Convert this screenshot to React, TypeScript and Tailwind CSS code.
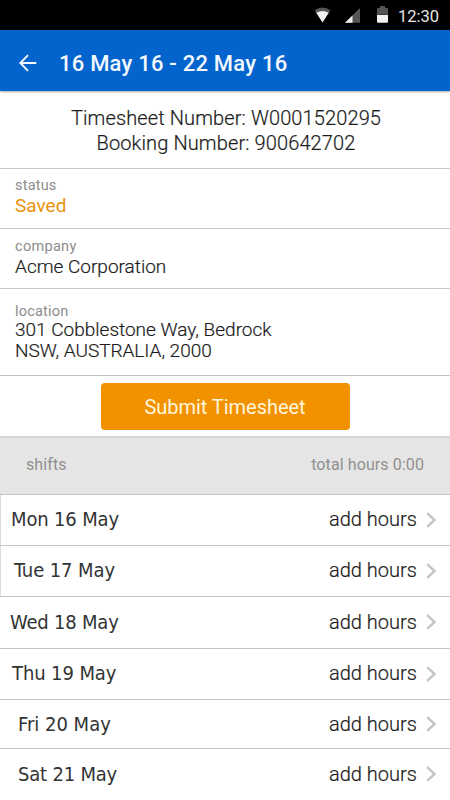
const shifts = [
  { day: "Mon 16 May", row: "h-[51px]", label: "border-l border-[#dcdcdc] pl-[10px] pb-[3px] tracking-[-0.15px]" },
  { day: "Tue 17 May", row: "h-[51px]", label: "border-l border-[#dcdcdc] pl-[13px] pb-[3px] tracking-[-0.1px]" },
  { day: "Wed 18 May", row: "h-[52px]", label: "pl-[10px] pb-[2px] tracking-[-0.2px]" },
  { day: "Thu 19 May", row: "h-[51px]", label: "pl-[12px] pb-[3px] tracking-[-0.1px]" },
  { day: "Fri 20 May", row: "h-[49px] pt-px", label: "pl-[18px] pb-px" },
  { day: "Sat 21 May", row: "h-[52px]", label: "pl-[18px] pb-px tracking-[-0.2px]" },
];

function StatusBar() {
  return (
    <div className="flex h-[30px] items-center bg-black">
      <svg className="h-[30px] w-[98px] shrink-0 ml-[302px]" viewBox="302 0 98 30">
        <path d="M314.5 10.2Q322.5 4.8 330.5 10.2L322.5 22.5Z" fill="#555" />
        <path d="M316.3 12.8Q322.5 9.4 328.7 12.8L322.5 22.5Z" fill="#f2f2f2" />
        <path d="M360 8V22.7H345Z" fill="#555" />
        <path d="M352.5 15.4V22.7H345Z" fill="#f2f2f2" />
        <path d="M377 9q0-1 1-1h2V6h5v2h2q1 0 1 1v5h-11z" fill="#555" />
        <path d="M377 14.8h11V21.5q0 1.2-1.2 1.2h-8.6q-1.2 0-1.2-1.2z" fill="#f2f2f2" />
      </svg>
      <span className="mt-[4px] -ml-[2px] text-[16.5px] leading-5 text-[#e6e6e6]">12:30</span>
    </div>
  );
}

function Chevron() {
  return (
    <svg className="mb-px ml-[9px] h-[16px] w-[11px]" viewBox="0 0 11 16" fill="none" stroke="#c4c4c4" strokeWidth="2.4">
      <path d="M1.2 1.2L8.6 8L1.2 14.8" />
    </svg>
  );
}

export default function App() {
  return (
    <div className="flex h-[800px] w-[450px] flex-col overflow-hidden bg-white font-[Roboto,sans-serif] text-[#1c1c1c] whitespace-nowrap">
      <StatusBar />
      <header className="z-10 flex h-[61px] shrink-0 items-center bg-[#0264cc] pt-1 shadow-[0_1px_2px_rgba(0,0,0,0.35)]">
        <svg className="ml-[19px] h-[18px] w-[18px]" viewBox="0 0 18 18" fill="none" stroke="#f4f8ff" strokeWidth="1.9">
          <path d="M17.3 9H1.5M9 1.2L1.3 9L9 16.8" />
        </svg>
        <h1 className="mt-[3px] ml-[22px] text-[22px] leading-7 font-medium tracking-[0.22px] text-[#f4f8ff]">16 May 16 - 22 May 16</h1>
      </header>

      <section className="h-[78px] shrink-0 border-b border-[#c8c8c8] pt-[15px] pl-[2px] text-center text-[20px] leading-[25px] font-light [-webkit-text-stroke:0.2px]">
        <p className="tracking-[0.12px]">Timesheet Number: W0001520295</p>
        <p className="tracking-[0.12px]">Booking Number: 900642702</p>
      </section>

      <section className="h-[60px] shrink-0 border-b border-[#c8c8c8] pt-[7px] pl-[15px]">
        <p className="text-[14.5px] leading-[19px] tracking-[0.2px] text-[#8c8c8c]">status</p>
        <p className="text-[19px] leading-[21px] text-[#e8930c]">Saved</p>
      </section>

      <section className="h-[60px] shrink-0 border-b border-[#c8c8c8] pt-[8px] pl-[15px]">
        <p className="text-[14.5px] leading-[19px] tracking-[0.3px] text-[#8c8c8c]">company</p>
        <p className="text-[19px] leading-[22px] font-light [-webkit-text-stroke:0.2px]">Acme Corporation</p>
      </section>

      <section className="h-[87px] shrink-0 border-b border-[#c0c0c0] pt-[15px] pl-[15px]">
        <p className="text-[14.5px] leading-[16px] tracking-[0.2px] text-[#8c8c8c]">location</p>
        <p className="text-[19px] leading-[20px] font-light [-webkit-text-stroke:0.2px]">301 Cobblestone Way, Bedrock</p>
        <p className="text-[19px] leading-[22px] font-light tracking-[-0.03px] [-webkit-text-stroke:0.2px]">NSW, AUSTRALIA, 2000</p>
      </section>

      <section className="flex h-[60px] shrink-0 justify-center pt-[7px]">
        <button className="h-[47px] w-[249px] rounded-[4px] bg-[#f39200] pt-px text-[20px] tracking-[-0.03px] text-[#fff6dc]">Submit Timesheet</button>
      </section>

      <section className="flex h-[59px] shrink-0 items-center justify-between border-t-2 border-b border-t-[#d6d6d6] border-b-[#c4c4c4] bg-[#e5e5e5] pr-[26px] pb-[2px] pl-[26px] text-[16px] tracking-[0.1px] text-[#909090]">
        <span>shifts</span>
        <span>total hours 0:00</span>
      </section>

      <ul>
        {shifts.map((shift) => (
          <li key={shift.day} className={`flex items-center border-b border-[#c4c4c4] ${shift.row}`}>
            <span className={`flex h-full items-center font-['DejaVu_Sans_Condensed','DejaVu_Sans',sans-serif] text-[20px] text-[#333] ${shift.label}`}>{shift.day}</span>
            <span className="ml-auto pb-[2px] text-[20px] font-light tracking-[0.02px] [-webkit-text-stroke:0.2px]">add hours</span>
            <Chevron />
            <span className="w-[13px]" />
          </li>
        ))}
      </ul>
    </div>
  );
}
